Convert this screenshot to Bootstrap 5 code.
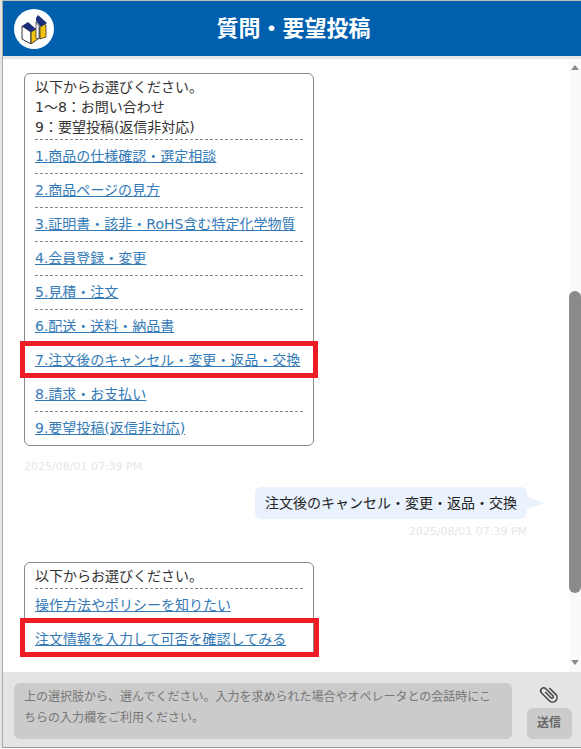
<!DOCTYPE html>
<html lang="ja">
<head>
  <meta charset="utf-8">
  <title>質問・要望投稿</title>
  <link href="https://cdn.jsdelivr.net/npm/bootstrap@5.3.3/dist/css/bootstrap.min.css" rel="stylesheet">
  <style>
    html, body { height: 749px; overflow: hidden; }
    body { background: #fff; font-family: "DejaVu Sans", "Noto Sans CJK JP", sans-serif; font-size: 14px; color: #333; }
    .chat-window { height: 748px; margin-left: 2px; border-top: 1px solid #bbb; border-left: 1px solid #aaa; border-bottom: 1px solid #999; box-shadow: -2px 0 0 #e4e4e4; }
    .chat-head { height: 55px; background: #0060ae; padding-left: 11px; position: relative; }
    .chat-logo { width: 40px; height: 40px; background: #fff; border-radius: 50%; }
    .chat-title { font-size: 22px; font-weight: 700; color: #fff; line-height: 1; padding-right: 48px; }
    .head-gap { height: 3px; background: #e6e6e6; }
    .chat-log { flex: 1 1 0; min-height: 0; overflow: hidden; position: relative; padding: 14px 54px 0 21px; }
    .choice-box { width: 290px; border: 1px solid #888; border-radius: 6px; padding: 3px 10px 0; line-height: 20px; }
    .choice-second { margin-top: 23px; }
    .choice-item { border-top: 1px dashed #888; height: 34px; padding-top: 6px; }
    .choice-item a { color: #337ab7; }
    .choice-intro { padding-bottom: 2px; }
    .stamp { font-size: 11px; color: #e6e6e6; line-height: 14px; }
    .stamp-left { margin-top: 14px; }
    .user-wrap { margin-top: 13px; }
    .stamp-right { margin-top: 6px; }
    .user-bubble { background: #e9f2fd; border-radius: 6px; color: #222; padding: 6px 10px; line-height: 20px; position: relative; height: 32px; }
    .user-bubble::after { content: ""; position: absolute; left: 100%; top: 10px; border-left: 18px solid #e9f2fd; border-top: 6px solid transparent; border-bottom: 6px solid transparent; }
    .red-mark { position: absolute; border: 5px solid #ee1c25; }
    .red-one { left: 17px; top: 282px; width: 298px; height: 37px; }
    .red-two { left: 17px; top: 559px; width: 299px; height: 39px; }
    .fake-bar { position: absolute; right: 0; top: 0; bottom: 0; width: 12px; background: #fafafa; }
    .fake-thumb { position: absolute; left: 0; right: 0; top: 232px; height: 302px; background: #8a8a8a; border-radius: 6px; }
    .arrow-up, .arrow-down { position: absolute; left: 2px; border-left: 4px solid transparent; border-right: 4px solid transparent; }
    .arrow-up { top: 6px; border-bottom: 5px solid #8a8a8a; }
    .arrow-down { bottom: 7px; border-top: 5px solid #8a8a8a; }
    .chat-foot { height: 75px; background: #e4e4e4; padding: 11px 9px 0 11px; }
    .foot-input { width: 498px; height: 56px; background: #cbcbcb; border-radius: 6px; color: #777; font-size: 12px; line-height: 21px; padding: 4px 10px; }
    .foot-side { width: 46px; }
    .send-box { width: 45px; height: 31px; background: #cbcbcb; border-radius: 6px; color: #666; font-size: 12px; font-weight: 700; line-height: 31px; text-align: center; }
  </style>
</head>
<body>
  <div class="chat-window d-flex flex-column">
    <div class="chat-head d-flex align-items-center">
      <div class="chat-logo d-flex align-items-center justify-content-center flex-shrink-0">
        <svg width="30" height="30" viewBox="0 0 30 30">
          <path d="M3 12 L12 18 V30 L3 25 Z" fill="#fff" stroke="#333" stroke-width="1"/>
          <path d="M12 18 L20 13 V24 L12 30 Z" fill="#f4c20d" stroke="#333" stroke-width="1"/>
          <path d="M3 12 L9 8 L17 15 L12 18 Z" fill="#1d2f7a"/>
          <path d="M19 6 L27 11 V23 L21 25 V11 Z" fill="#f4c20d" stroke="#333" stroke-width=".8"/>
          <path d="M17 4 L19 1 L28 9 L22 13 L17 7 Z" fill="#1d2f7a"/>
          <path d="M17 8 L20 12 V25 L17 24 Z" fill="#fff" stroke="#333" stroke-width=".8"/>
        </svg>
      </div>
      <div class="chat-title flex-grow-1 text-center">質問・要望投稿</div>
    </div>
    <div class="head-gap"></div>

    <div class="chat-log flex-grow-1">
      <div class="choice-box">
        <div class="choice-intro">以下からお選びください。<br>1～8：お問い合わせ<br>9：要望投稿(返信非対応)</div>
        <div class="choice-item"><a href="#">1.商品の仕様確認・選定相談</a></div>
        <div class="choice-item"><a href="#">2.商品ページの見方</a></div>
        <div class="choice-item"><a href="#">3.証明書・該非・RoHS含む特定化学物質</a></div>
        <div class="choice-item"><a href="#">4.会員登録・変更</a></div>
        <div class="choice-item"><a href="#">5.見積・注文</a></div>
        <div class="choice-item"><a href="#">6.配送・送料・納品書</a></div>
        <div class="choice-item"><a href="#">7.注文後のキャンセル・変更・返品・交換</a></div>
        <div class="choice-item"><a href="#">8.請求・お支払い</a></div>
        <div class="choice-item"><a href="#">9.要望投稿(返信非対応)</a></div>
      </div>
      <div class="stamp stamp-left">2025/08/01 07:39 PM</div>
      <div class="user-wrap d-flex flex-column align-items-end">
        <div class="user-bubble">注文後のキャンセル・変更・返品・交換</div>
        <div class="stamp stamp-right">2025/08/01 07:39 PM</div>
      </div>
      <div class="choice-box choice-second">
        <div class="choice-intro">以下からお選びください。</div>
        <div class="choice-item"><a href="#">操作方法やポリシーを知りたい</a></div>
        <div class="choice-item"><a href="#">注文情報を入力して可否を確認してみる</a></div>
      </div>

      <div class="red-mark red-one"></div>
      <div class="red-mark red-two"></div>
      <div class="fake-bar">
        <div class="arrow-up"></div>
        <div class="fake-thumb"></div>
        <div class="arrow-down"></div>
      </div>
    </div>

    <div class="chat-foot d-flex justify-content-between">
      <div class="foot-input">上の選択肢から、選んでください。入力を求められた場合やオペレータとの会話時にこちらの入力欄をご利用ください。</div>
      <div class="foot-side d-flex flex-column align-items-center">
        <svg width="22" height="22" viewBox="0 0 22 22" fill="none" stroke="#444" stroke-width="1.5">
          <g transform="rotate(-45 11 11)">
            <path d="M15.5 7 V16 a4.5 4.5 0 0 1 -9 0 V5 a3 3 0 0 1 6 0 V15 a1.4 1.4 0 0 1 -2.8 0 V7"/>
          </g>
        </svg>
        <div class="send-box mt-auto mb-2">送信</div>
      </div>
    </div>
  </div>
  <script src="https://cdn.jsdelivr.net/npm/bootstrap@5.3.3/dist/js/bootstrap.bundle.min.js"></script>
</body>
</html>
